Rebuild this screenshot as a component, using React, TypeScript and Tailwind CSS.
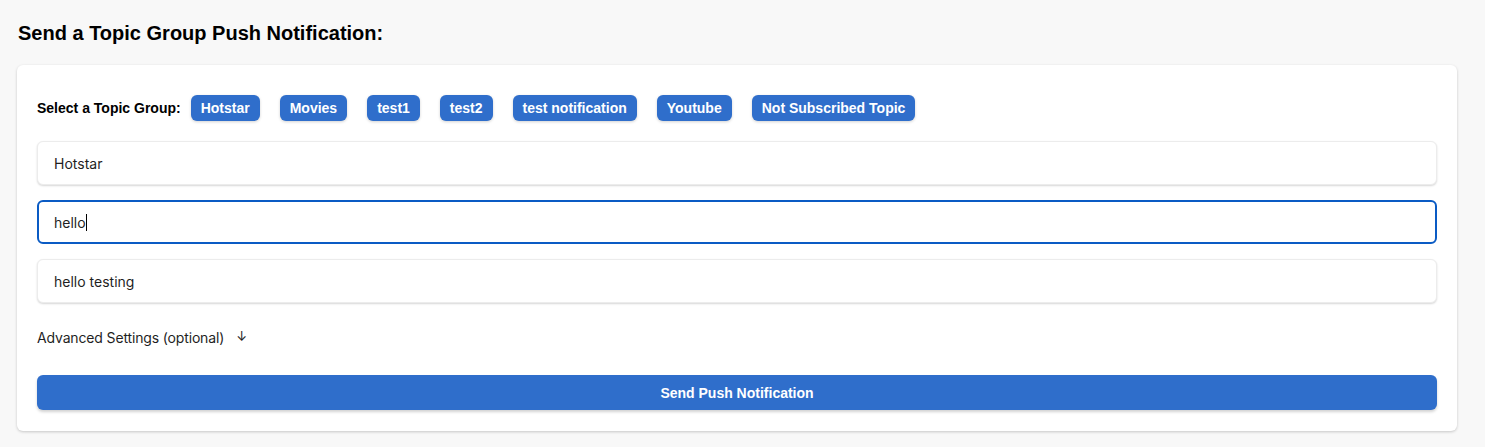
const topics = ["Hotstar", "Movies", "test1", "test2", "test notification", "Youtube", "Not Subscribed Topic"];

function Field({ value, focused }: { value: string; focused?: boolean }) {
  return (
    <div
      className={
        "h-[44px] flex items-center rounded-md bg-white px-4 text-[14px] text-[#1f1f1f] " +
        (focused
          ? "border-2 border-[#0a5bc4] px-[15px]"
          : "border border-[#ececec] shadow-[0_1px_2px_rgba(0,0,0,0.16)]")
      }
      style={{ fontFamily: "Inter, 'Noto Sans', sans-serif" }}
    >
      {value}
      {focused && <span className="inline-block w-px h-[17px] bg-black" />}
    </div>
  );
}

export default function App() {
  return (
    <div className="min-h-[447px] bg-[#f8f8f8] pl-[17px] pr-[28px] pt-[22px]" style={{ fontFamily: "'Liberation Sans', Arial, sans-serif" }}>
      <h1 className="text-[20px] font-bold leading-[23px] text-black pl-px mb-[20px]">
        Send a Topic Group Push Notification:
      </h1>

      <div className="bg-white rounded-md shadow-[0_1px_3px_rgba(0,0,0,0.2)] pt-[30px] px-5 pb-[21px]">
        {/* Topic chips */}
        <div className="flex items-center h-[26px]">
          <span className="text-[14px] font-bold text-black mr-[10px] pt-px">Select a Topic Group:</span>
          <div className="flex gap-5">
            {topics.map((t) => (
              <button
                key={t}
                className="h-[26px] px-[10px] pt-px rounded-md bg-[#2f6ecb] text-white text-[14px] font-bold shadow-[0_1px_3px_rgba(0,0,0,0.18)]"
              >
                {t}
              </button>
            ))}
          </div>
        </div>

        {/* Inputs */}
        <div className="mt-5 flex flex-col gap-[15px]">
          <Field value="Hotstar" />
          <Field value="hello" focused />
          <Field value="hello testing" />
        </div>

        <div
          className="mt-[24px] h-5 flex items-center text-[14px] text-[#1f1f1f] tracking-[-0.15px]"
          style={{ fontFamily: "Inter, 'Noto Sans', sans-serif" }}
        >
          Advanced Settings (optional)
          <span className="ml-[12px] text-[13px]">↓</span>
        </div>

        <button className="mt-[28px] w-full h-[35px] pt-[2px] rounded-md bg-[#2f6ecb] text-white text-[14px] font-bold shadow-[0_2px_3px_rgba(0,0,0,0.18)]">
          Send Push Notification
        </button>
      </div>
    </div>
  );
}
